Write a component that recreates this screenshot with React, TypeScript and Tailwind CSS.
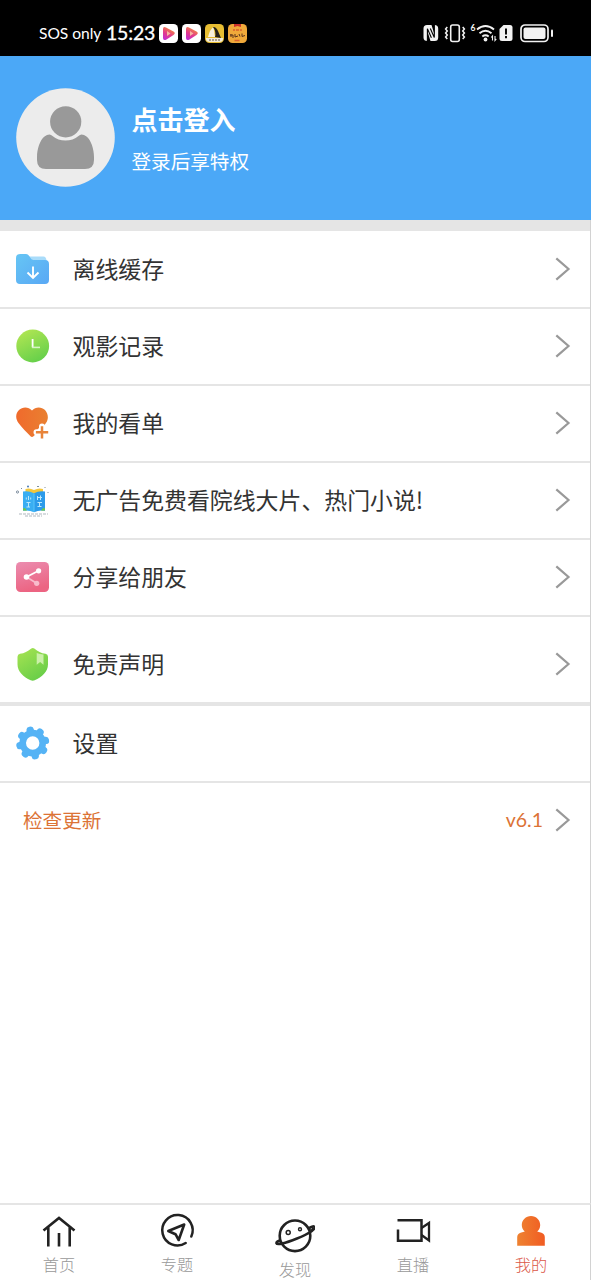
import React from "react";

type MenuItem = {
  name: string;
  icon: React.ReactNode;
  rowClass: string;
  arrow: boolean;
};

function FolderIcon() {
  return (
    <svg width="34" height="34" viewBox="0 0 34 34" fill="none">
      <defs>
        <linearGradient id="folder" x1="0" y1="0" x2="1" y2="1">
          <stop offset="0" stopColor="#66c5f4" />
          <stop offset="1" stopColor="#59a8f5" />
        </linearGradient>
      </defs>
      <path d="M12 4.500h15.500q2.500 0 3 4v5H12z" fill="#a9dcfa" />
      <path
        d="M4 2h6q2 0 3.200 2l1.300 2q1 2 3 2H29q4 0 4 4V28q0 4-4 4H4q-4 0-4-4V6q0-4 4-4z"
        fill="url(#folder)"
      />
      <path d="M17 14.500v11M11.500 20.500l5.500 5.500 5.500-5.500" stroke="#fff" strokeWidth="1.900" />
    </svg>
  );
}

function ClockIcon() {
  return (
    <svg width="34" height="34" viewBox="0 0 34 34" fill="none">
      <defs>
        <linearGradient id="clock" x1="0.200" y1="0" x2="0.700" y2="1">
          <stop offset="0" stopColor="#b2e653" />
          <stop offset="1" stopColor="#63cf4a" />
        </linearGradient>
      </defs>
      <circle cx="16.700" cy="17" r="16.400" fill="url(#clock)" />
      <path d="M16.600 10v8.400" stroke="#fff" strokeWidth="1.800" />
      <path d="M16 18.400h8" stroke="#d6f5c4" strokeWidth="1.600" />
    </svg>
  );
}

function HeartIcon() {
  return (
    <svg width="34" height="34" viewBox="0 0 34 34" fill="none">
      <defs>
        <linearGradient id="heart" x1="0" y1="0" x2="1" y2="0">
          <stop offset="0" stopColor="#f06a2c" />
          <stop offset="1" stopColor="#e98031" />
        </linearGradient>
      </defs>
      <path
        d="M16 4.500C12.500 0.500 6.500 0.500 3 4c-3.700 3.700-3.600 9-.5 13C5.500 21.500 10.500 26 14.500 30.200q1.500 1.500 3 0C21.500 26.500 27 21.500 30 17c2.700-4 2.500-9-1-13C25.500 0.500 19.500 0.500 16 4.500z"
        fill="url(#heart)"
      />
      <path
        d="M26 20.500v11.500M20.500 26.300h11.500"
        stroke="#fff"
        strokeWidth="6"
        strokeLinecap="round"
      />
      <circle cx="26" cy="26.300" r="5.200" fill="#fff" />
      <path d="M26 20.200v12.200M19.900 26.300h12.300" stroke="#e8843a" strokeWidth="2.500" />
    </svg>
  );
}

function BookIcon() {
  return (
    <svg width="34" height="34" viewBox="0 0 34 34" fill="none">
      <path d="M9.500 6q4-1.500 8.500 1 4.500-2.500 9-1V12h-17.500z" fill="#f3c73d" />
      <path d="M7 8.500q6-1 11 1.800v19q-5-2.500-11-1.500z" fill="#39aef2" />
      <path d="M29 8.500q-6-1-11 1.800v19q5-2.500 11-1.500z" fill="#2c9bea" />
      <path d="M18 10.500v18.500" stroke="#58c5f8" strokeWidth="1" />
      <path d="M12.500 13v4M10.300 14.500v2M14.700 14.500v2M10.500 19.500h4M12.500 19v5M10.500 24h3.500" stroke="#bce9fc" />
      <path d="M21.500 13v4M24.500 12.500v4.500M21 14.500h5M21.500 19.500h4.500M23.500 19v5M21.500 23.500h4" stroke="#bce9fc" />
      <path d="M7 25.500q2-1.500 4 2.300l-4-.3zM29 25.500q-2-1.500-4 2.300l4-.3z" fill="#6ec64b" />
      <path d="M3 31h29M9 33h17" stroke="#8d9aa5" strokeWidth="0.700" strokeDasharray="3 1" />
      <circle cx="1.500" cy="9" r="1.100" stroke="#6f8194" strokeWidth="0.900" />
      <circle cx="12" cy="3.500" r="1" fill="#4b7bb5" />
      <path d="M5 5l1 1M21 3.500h2M28.500 4l1 1M31.500 9l1 1" stroke="#7e91a0" />
    </svg>
  );
}

function ShareIcon() {
  return (
    <svg width="34" height="34" viewBox="0 0 34 34" fill="none">
      <defs>
        <linearGradient id="share" x1="0" y1="0" x2="0.300" y2="1">
          <stop offset="0" stopColor="#eb8db0" />
          <stop offset="1" stopColor="#ec6482" />
        </linearGradient>
      </defs>
      <rect y="2" width="33" height="30" rx="4.500" fill="url(#share)" />
      <path d="M11 17.200l9.500 6" stroke="#f8bccb" strokeWidth="1.700" />
      <circle cx="20.700" cy="23.300" r="2.600" fill="#f8bccb" />
      <path d="M10.500 17l12-6.300" stroke="#fff" strokeWidth="1.700" />
      <circle cx="10.500" cy="17" r="2.800" fill="#fff" />
      <circle cx="22.600" cy="10.800" r="2.600" fill="#fff" />
    </svg>
  );
}

function ShieldIcon() {
  return (
    <svg width="34" height="34" viewBox="0 0 34 34" fill="none">
      <defs>
        <linearGradient id="shield" x1="0.100" y1="0" x2="0.700" y2="1">
          <stop offset="0" stopColor="#a6e352" />
          <stop offset="1" stopColor="#66cd48" />
        </linearGradient>
      </defs>
      <path
        d="M15.300 1.500q1.500-1 3 0C22 4.500 25 6.300 29.500 6.800q2.500.3 2.500 3v7.500c0 7.500-6 12.700-13.300 16q-2 .9-4 0C7.500 30 1.500 24.800 1.500 17.300V9.800q0-2.700 2.500-3C8.500 6.300 11.500 4.500 15.300 1.500z"
        fill="url(#shield)"
      />
      <path d="M20.700 6q3 1.200 6.800 1.500v10.300l-3.400-2.800-3.400 2.800z" fill="#cbf0a9" />
    </svg>
  );
}

function GearIcon() {
  const angles = [11, 56, 101, 146, 191, 236, 281, 326];
  return (
    <svg width="34" height="34" viewBox="0 0 34 34" fill="none">
      <g fill="#55b3f5">
        {angles.map((angle) => (
          <rect
            key={angle}
            x="13"
            y="0.400"
            width="7.400"
            height="9"
            rx="3.400"
            transform={`rotate(${angle - 22} 16.700 17)`}
          />
        ))}
      </g>
      <circle cx="16.700" cy="17" r="10" stroke="#55b3f5" strokeWidth="6.600" />
    </svg>
  );
}

function Arrow() {
  return (
    <svg width="16" height="26" viewBox="0 0 16 26" fill="none">
      <path d="M1.300 2.300L13.500 13 1.300 23.700" stroke="#999" strokeWidth="2.200" />
    </svg>
  );
}

function PlayAppIcon() {
  return (
    <svg width="19" height="19" viewBox="0 0 19 19">
      <defs>
        <linearGradient id="play" x1="0" y1="1" x2="0.500" y2="0">
          <stop offset="0" stopColor="#b92be0" />
          <stop offset="0.500" stopColor="#e2388d" />
          <stop offset="1" stopColor="#f18a3c" />
        </linearGradient>
      </defs>
      <rect width="19" height="19" rx="4.500" fill="#fff" />
      <path d="M4 5q0-3 3-1.600l7.500 4.200q2.500 1.600 0 3.400L7.500 15.500Q4 17 4 14z" fill="url(#play)" />
      <path d="M8 7l3.500 2.500L8 12z" fill="#f6b6a1" />
    </svg>
  );
}

function StatusBar() {
  return (
    <div className="h-14 shrink-0 bg-black text-white flex items-center justify-between pl-[39px] pr-[37px] pt-[11px]">
      <div className="flex items-center font-[Lato,sans-serif]">
        <span className="text-[15.600px] w-[67px] whitespace-nowrap leading-5 pb-[2px] tracking-[-0.050px]">
          SOS only
        </span>
        <span className="text-[19.500px] w-[53px] leading-5 pb-[2px] tracking-[-0.200px] [-webkit-text-stroke:0.300px_white]">
          15:23
        </span>
        <div className="flex gap-1">
          <PlayAppIcon />
          <PlayAppIcon />
          <svg width="19" height="19" viewBox="0 0 19 19">
            <rect width="19" height="19" rx="4.500" fill="#e7bd32" />
            <path d="M3 13q2-8 5.500-10l1.500 10z" fill="#f8f1dc" />
            <path d="M8 3q3-.5 5 4l3 7-6-1q1.500-5-2-10z" fill="#26221b" />
            <path d="M1 14h17v1q0 3-4 3H5q-4 0-4-3z" fill="#f4ecd9" />
            <path d="M4 16h11" stroke="#62584a" strokeDasharray="2 1" />
          </svg>
          <svg width="19" height="19" viewBox="0 0 19 19">
            <rect width="19" height="19" rx="4.500" fill="#f0a93a" />
            <path d="M6 0h7v3l-3.500-1L6 3z" fill="#c92f2b" />
            <path d="M5 6h2M12 6h2M8 6h3M6.500 16.500h5" stroke="#d9602c" strokeWidth="1.300" />
            <path d="M2 11h3v3M3 10v3M7 10v3l3-1M11 10l1 2.500M14 9.500v3l3-1" stroke="#5c321a" fill="none" />
          </svg>
        </div>
      </div>

      <div className="flex items-center pb-px">
        <svg width="131" height="22" viewBox="0 0 131 22" fill="none">
          <path
            d="M4 3h4.500l3 9.500V3q3.700 0 3.700 3.500v9q0 3.500-3.500 3.500H7.500l-3-9.500V19Q.5 19 .5 15.500v-9Q.5 3 4 3z"
            fill="#f2f2f2"
          />
          <path d="M4.400 19V6.700l4 9M11.300 3v12.500l-4-9" stroke="#000" strokeWidth="1.100" />
          <rect x="27.700" y="3" width="8.600" height="16.500" rx="2" stroke="#f2f2f2" strokeWidth="1.600" />
          <path
            d="M24.300 5l-1.700 2 1.700 2-1.700 2 1.700 2-1.700 2 1.700 2M39.700 5l1.700 2-1.700 2 1.700 2-1.700 2 1.700 2-1.700 2"
            stroke="#f2f2f2"
            strokeWidth="1.500"
          />
          <text x="47.500" y="9" fontSize="8.500" fontWeight="bold" fill="#f2f2f2" fontFamily="Lato">
            6
          </text>
          <path
            d="M54 7.500q8.500-7 17 0M56.500 11.200q6-5 12 0M59.300 14.500q3.200-2.500 6.400 0"
            stroke="#f2f2f2"
            strokeWidth="1.900"
          />
          <circle cx="62.500" cy="17.500" r="1.900" fill="#f2f2f2" />
          <path d="M69.500 18.500v-4.500l-1.300 1.500M72 14v4.500l1.300-1.500" stroke="#f2f2f2" strokeWidth="1.100" />
          <path d="M80.500 3H87q2.500 0 2.500 2.500v11Q89.500 19 87 19h-8q-2.500 0-2.500-2.500V7z" fill="#f2f2f2" />
          <path d="M83 6.500v6M83 14v2.200" stroke="#000" strokeWidth="1.900" />
          <rect x="98" y="3" width="27" height="16.500" rx="4" stroke="#f2f2f2" strokeWidth="1.700" />
          <rect x="100.500" y="5.500" width="22" height="11.500" rx="2" fill="#f2f2f2" />
          <rect x="128" y="7.500" width="2" height="7.500" rx="1" fill="#f2f2f2" />
        </svg>
      </div>
    </div>
  );
}

export default function App() {
  const menuItems: MenuItem[] = [
    { name: "离线缓存", icon: <FolderIcon />, rowClass: "h-[78px] border-b-2", arrow: true },
    { name: "观影记录", icon: <ClockIcon />, rowClass: "h-[77px] pb-px border-b-2", arrow: true },
    { name: "我的看单", icon: <HeartIcon />, rowClass: "h-[77px] pb-px border-b-2", arrow: true },
    {
      name: "无广告免费看院线大片、热门小说!",
      icon: <BookIcon />,
      rowClass: "h-[77px] pb-px border-b-2",
      arrow: true,
    },
    { name: "分享给朋友", icon: <ShareIcon />, rowClass: "h-[77px] pb-px border-b-2", arrow: true },
    { name: "免责声明", icon: <ShieldIcon />, rowClass: "h-[89px] pt-[9px] border-b-4", arrow: true },
    { name: "设置", icon: <GearIcon />, rowClass: "h-[77px] pb-px border-b-2", arrow: false },
  ];

  const tabs = [
    {
      name: "首页",
      style: "text-[#999] pt-[8px]",
      icon: (
        <svg width="40" height="40" viewBox="0 0 40 40" fill="none" stroke="#222" strokeWidth="2.600">
          <path d="M4.500 17.500L20 5l15.500 12.500M9.300 14v19.500M30.700 14v19.500M20 20v13.500" />
        </svg>
      ),
    },
    {
      name: "专题",
      style: "text-[#999] pt-[8px]",
      icon: (
        <svg width="40" height="40" viewBox="0 0 40 40" fill="none" stroke="#222" strokeWidth="2.500">
          <path d="M28.700 30A15.200 15.200 0 1 1 34.300 23.500" strokeLinecap="round" />
          <path d="M27.200 11.500l-15.900 6.500 7.200 3.200 3.200 5.800z" strokeWidth="2.600" strokeLinejoin="round" />
        </svg>
      ),
    },
    {
      name: "发现",
      style: "text-[#999] pt-[13px]",
      icon: (
        <svg width="40" height="40" viewBox="0 0 40 40" fill="none" stroke="#222" strokeWidth="2.600">
          <circle cx="20" cy="17.800" r="15.300" />
          <path d="M34.500 10q4-2.700 5-.8c.8 2-5 6.300-17.500 11.300S2 27.200 1.500 25.300q-.4-1.500 3.500-3" />
          <circle cx="3.800" cy="24.500" r="1.600" strokeWidth="1.500" />
          <circle cx="36" cy="10.500" r="1.600" strokeWidth="1.500" />
          <circle cx="13.200" cy="14.400" r="2" strokeWidth="1.500" />
          <circle cx="25" cy="11.300" r="1.500" strokeWidth="1.400" />
        </svg>
      ),
    },
    {
      name: "直播",
      style: "text-[#999] pt-[8px]",
      icon: (
        <svg width="40" height="40" viewBox="0 0 40 40" fill="none" stroke="#222" strokeWidth="2.500">
          <path d="M4.500 7.300h24v20.500H5V16.500" />
          <path d="M28.500 15l7.500-5v17.500L28.500 22" strokeWidth="2.300" />
        </svg>
      ),
    },
    {
      name: "我的",
      style: "text-[#db5747] pt-[8px]",
      icon: (
        <svg width="40" height="40" viewBox="0 0 40 40">
          <defs>
            <linearGradient id="me" x1="0" y1="0" x2="1" y2="0">
              <stop offset="0" stopColor="#ee8231" />
              <stop offset="1" stopColor="#f15c22" />
            </linearGradient>
          </defs>
          <path
            d="M20 3c5.200 0 9.200 4 9.200 9 0 2.700-1.200 5-3 6.600l4.300 1.200q3.300 1 3.300 4.500v8.500H6.200v-8.500q0-3.500 3.300-4.500l4.300-1.200c-1.800-1.600-3-3.900-3-6.600 0-5 4-9 9.200-9z"
            fill="url(#me)"
          />
        </svg>
      ),
    },
  ];

  return (
    <div className="w-full h-screen bg-white flex flex-col overflow-hidden font-['Noto_Sans_CJK_SC',sans-serif] text-[#333]">
      <StatusBar />

      {/* PROFILE HEADER */}
      <header className="h-[164px] shrink-0 bg-[#4ba8f7] text-white flex items-center pl-4 pb-[2px]">
        <svg width="99" height="99" viewBox="0 0 99 99" className="shrink-0">
          <circle cx="49.500" cy="49.500" r="49.300" fill="#ececec" />
          <path
            d="M33.500 46.500q-2.500 0-5 2C24 52 21 61 21 69v3q0 9 9 9h39q9 0 9-9v-3c0-8-3-17-7.500-20.500q-2.500-2-5-2-1.500 0-3 1.500-5.500 4.500-13 4.500T36.500 48q-1.500-1.500-3-1.500z"
            fill="#999"
          />
          <circle cx="49.700" cy="33.800" r="15.600" fill="#999" />
        </svg>
        <div className="ml-[16.500px]">
          <h1 className="text-[26px] leading-[38px] font-bold">点击登入</h1>
          <p className="text-[19.600px] leading-7 mt-[9px]">登录后享特权</p>
        </div>
      </header>

      {/* MENU */}
      <main className="flex-1 min-h-0 border-r border-[#d2d2d2]">
        <div className="h-[11px] bg-[#e5e5e5]" />
        {menuItems.map((item) => (
          <div
            key={item.name}
            className={`${item.rowClass} border-[#e5e5e5] flex items-center pl-4 pr-[19px]`}
          >
            <span className="w-[56.500px] shrink-0">{item.icon}</span>
            <span className="flex-1 text-[22.900px] leading-8 pb-[2px] whitespace-nowrap">{item.name}</span>
            {item.arrow && <Arrow />}
          </div>
        ))}
        <div className="h-[75px] pb-px flex items-center pl-[23px] pr-[19px] text-[19.600px] text-[#dc7336]">
          <span className="flex-1 leading-8">检查更新</span>
          <span className="mr-[12px] font-[Lato,sans-serif] text-[19.500px]">v6.1</span>
          <Arrow />
        </div>
      </main>

      {/* TAB BAR */}
      <nav className="h-[77px] shrink-0 border-t-2 border-r border-t-[#e5e5e5] border-r-[#d2d2d2] grid grid-cols-5">
        {tabs.map((tab) => (
          <div key={tab.name} className={`${tab.style} flex flex-col items-center`}>
            {tab.icon}
            <span className="text-[16.200px] leading-[22px] font-light">{tab.name}</span>
          </div>
        ))}
      </nav>
    </div>
  );
}
